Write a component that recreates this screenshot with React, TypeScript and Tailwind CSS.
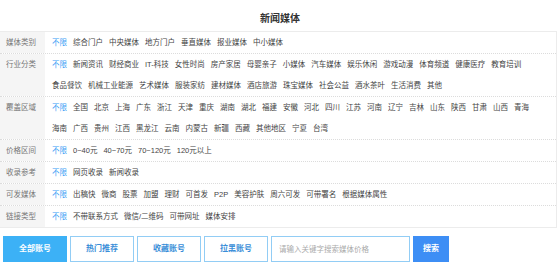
import React from "react";

interface FilterRow {
  label: string;
  items: string[];
}

const rows: FilterRow[] = [
  {
    label: "媒体类别",
    items: ["综合门户", "中央媒体", "地方门户", "垂直媒体", "报业媒体", "中小媒体"],
  },
  {
    label: "行业分类",
    items: [
      "新闻资讯", "财经商业", "IT-科技", "女性时尚", "房产家居", "母婴亲子", "小媒体",
      "汽车媒体", "娱乐休闲", "游戏动漫", "体育频道", "健康医疗", "教育培训", "食品餐饮",
      "机械工业能源", "艺术媒体", "服装家纺", "建材媒体", "酒店旅游", "珠宝媒体",
      "社会公益", "酒水茶叶", "生活消费", "其他",
    ],
  },
  {
    label: "覆盖区域",
    items: [
      "全国", "北京", "上海", "广东", "浙江", "天津", "重庆", "湖南", "湖北", "福建",
      "安徽", "河北", "四川", "江苏", "河南", "辽宁", "吉林", "山东", "陕西", "甘肃",
      "山西", "青海", "海南", "广西", "贵州", "江西", "黑龙江", "云南", "内蒙古", "新疆",
      "西藏", "其他地区", "宁夏", "台湾",
    ],
  },
  { label: "价格区间", items: ["0~40元", "40~70元", "70~120元", "120元以上"] },
  { label: "收录参考", items: ["网页收录", "新闻收录"] },
  {
    label: "可发媒体",
    items: [
      "出稿快", "微商", "股票", "加盟", "理财", "可首发", "P2P", "美容护肤",
      "周六可发", "可带署名", "根据媒体属性",
    ],
  },
  { label: "链接类型", items: ["不带联系方式", "微信/二维码", "可带网址", "媒体安排"] },
];

const tabs = ["全部账号", "热门推荐", "收藏账号", "拉黑账号"];

export default function App() {
  return (
    <div
      className="w-[560px] h-[266px] bg-white overflow-hidden text-[#333]"
      style={{ fontFamily: '"Liberation Sans", "Noto Sans CJK SC", sans-serif' }}
    >
      <h2 className="pt-[13px] mb-[6px] text-center text-[10px] leading-[12px] font-bold text-[#333]">
        新闻媒体
      </h2>

      <div className="w-[557px] border border-l-0 border-[#ececec]">
        {rows.map((row, i) => (
          <div
            key={row.label}
            className={`flex ${i > 0 ? "border-t border-dotted border-[#dcdcdc]" : ""}`}
          >
            <div className="w-[45px] shrink-0 bg-[#f5f5f5] pl-[6px] text-[7.5px] leading-[21px] text-[#777]">
              {row.label}
            </div>
            <div className="flex flex-1 flex-wrap gap-x-[6px] pl-[7px] pr-[16px] text-[7.5px] leading-[21px]">
              <span className="text-[#3a9cf5]">不限</span>
              {row.items.map((item) => (
                <span key={item} className="text-[#444]">
                  {item}
                </span>
              ))}
            </div>
          </div>
        ))}
      </div>

      <div className="mt-[8px] flex items-center gap-[3px] pl-[3px]">
        {tabs.map((tab, i) => (
          <button
            key={tab}
            className={
              i === 0
                ? "w-[64px] h-[26px] bg-[#3cb1f6] text-white text-[8px] font-bold"
                : "w-[64px] h-[26px] border border-[#92cdf5] bg-white text-[#3a8ed8] text-[8px] font-bold"
            }
          >
            {tab}
          </button>
        ))}
        <input
          type="text"
          placeholder="请输入关键字搜索媒体价格"
          className="ml-[0px] w-[139px] h-[26px] border border-[#92cdf5] px-[7px] text-[7.5px] placeholder-[#aaa] outline-none"
        />
        <button className="w-[36px] h-[26px] bg-[#3d8ef5] text-white text-[8px] font-bold">
          搜索
        </button>
      </div>
    </div>
  );
}
